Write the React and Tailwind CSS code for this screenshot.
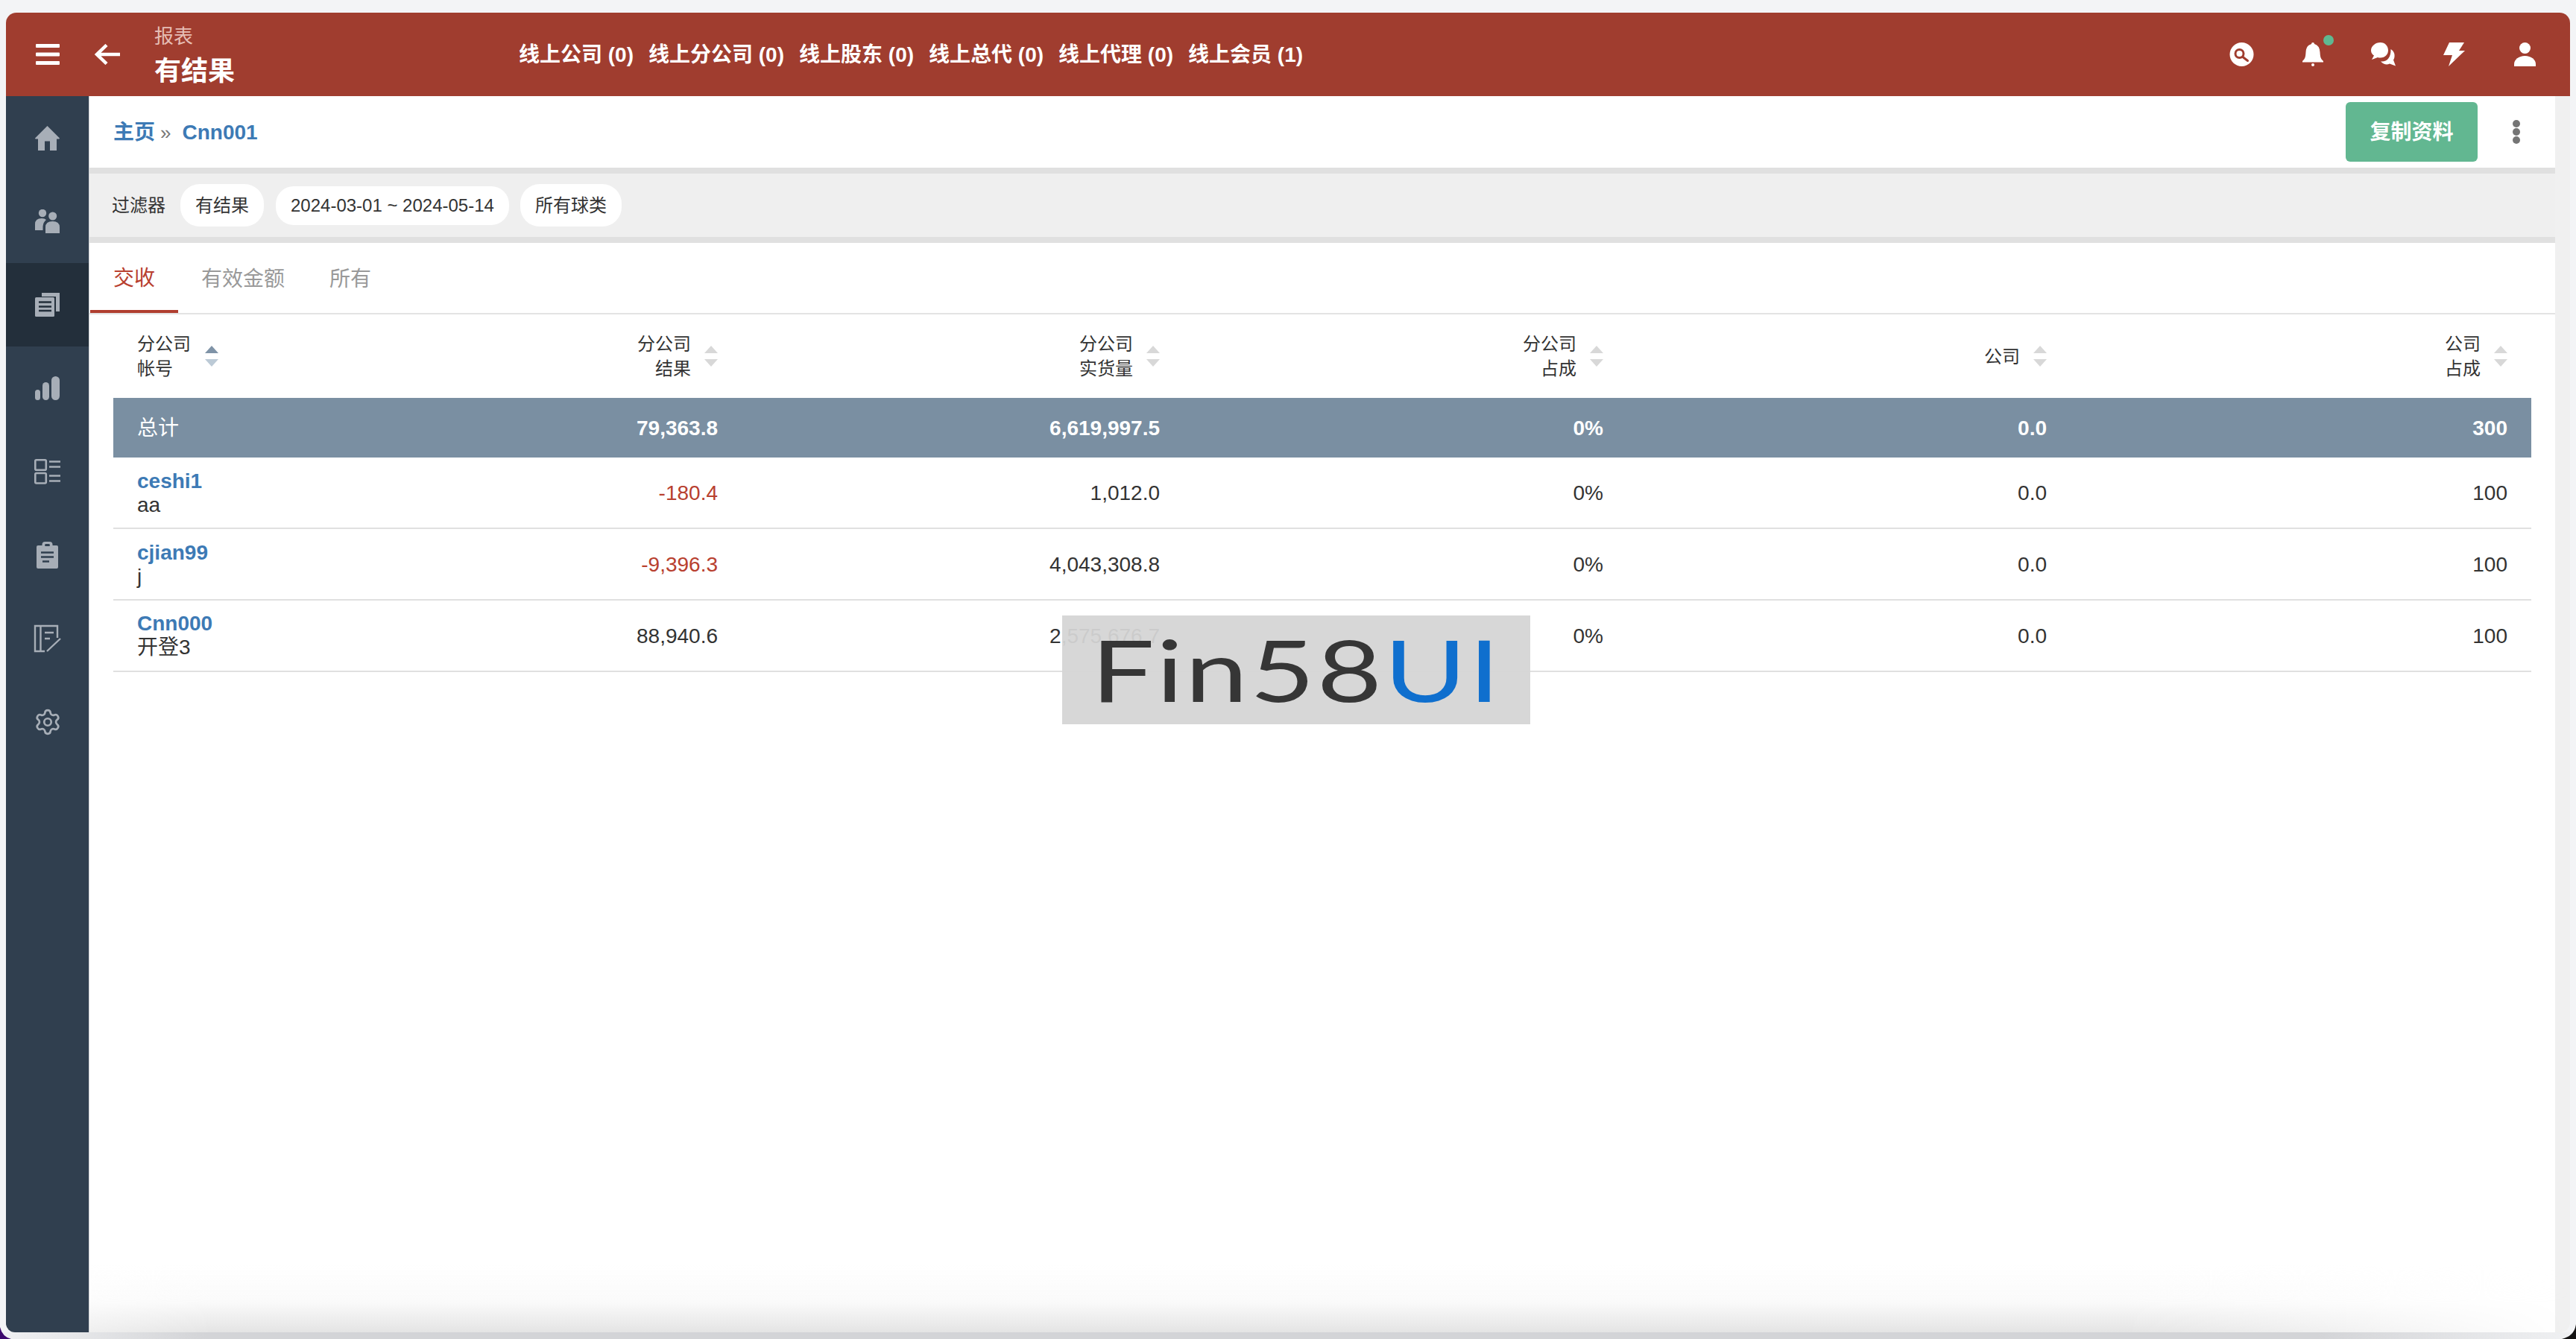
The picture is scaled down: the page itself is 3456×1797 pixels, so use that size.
import React from "react";
import { Settings } from "lucide-react";

const links = [
  "线上公司 (0)",
  "线上分公司 (0)",
  "线上股东 (0)",
  "线上总代 (0)",
  "线上代理 (0)",
  "线上会员 (1)",
];

const rows = [
  { id: "ceshi1", name: "aa", result: "-180.4", neg: true, goods: "1,012.0", namePad: "pt-[2px]" },
  { id: "cjian99", name: "j", result: "-9,396.3", neg: true, goods: "4,043,308.8", namePad: "pt-[2px]" },
  { id: "Cnn000", name: "开登3", result: "88,940.6", neg: false, goods: "2,575,676.7", namePad: "" },
];

const gridCols = "grid grid-cols-[248px_595px_593px_595px_595px_618px]";

function HomeIcon() {
  return (
    <svg width="33" height="33" viewBox="0 0 33 33" fill="#a7aeb7">
      <path d="M16.5 0 33 16.5l-.6 1H29V33h-9V20.500h-7V33H4V17.500H.6l-.6-1z" />
    </svg>
  );
}

function PeopleIcon() {
  return (
    <svg width="33" height="32" viewBox="0 0 33 32" fill="#a7aeb7">
      <circle cx="10" cy="5" r="5.200" />
      <circle cx="23.700" cy="9" r="5.500" />
      <path d="M0 28v-8q0-8 9-8 4 0 6 2-4 3-4.500 9v5z" />
      <path d="M14 32v-8q0-8 9.500-8T33 24v8z" />
    </svg>
  );
}

function PapersIcon() {
  return (
    <svg width="33" height="32" viewBox="0 0 33 32" fill="#a7aeb7">
      <path d="M9 0h24v25h-5V5H9z" />
      <rect x="0" y="6" width="26" height="26" rx="1.500" />
      <path d="M5 12.500h17M5 18.500h17M5 24h17" stroke="#232f3b" strokeWidth="2.400" />
    </svg>
  );
}

function BarsIcon() {
  return (
    <svg width="33" height="32" viewBox="0 0 33 32" fill="#a7aeb7">
      <rect x="0" y="18" width="7" height="14" rx="3.500" />
      <rect x="10" y="8" width="9" height="24" rx="4.500" />
      <rect x="22" y="0" width="11" height="32" rx="5.500" />
    </svg>
  );
}

function ListIcon() {
  return (
    <svg width="35" height="34" viewBox="0 0 35 34" fill="none" stroke="#a7aeb7" strokeWidth="2.600">
      <rect x="1.300" y="1.300" width="14.500" height="13.500" rx="1.500" />
      <rect x="1.300" y="19" width="14.500" height="13.500" rx="1.500" />
      <path d="M20 3.500h15M20 10.500h15M20 22.500h15M20 29.500h15" />
    </svg>
  );
}

function ClipboardIcon() {
  return (
    <svg width="29" height="36" viewBox="0 0 29 36" fill="#a7aeb7">
      <rect x="0" y="5" width="29" height="31" rx="2" />
      <rect x="7.500" y="0" width="14" height="9" rx="4" />
      <rect x="11" y="3" width="7" height="3" rx="1.500" fill="#303f4f" />
      <path d="M6 14.500h17M6 20.500h17M8 26.500h9" stroke="#303f4f" strokeWidth="2.400" />
    </svg>
  );
}

function FormIcon() {
  return (
    <svg width="37" height="38" viewBox="0 0 37 38" fill="none" stroke="#a7aeb7" strokeWidth="2.400">
      <path d="M32 18V2H2v34h13" />
      <path d="M9.500 2v34M15 11h12M15 19h7M18 36 36 19" />
    </svg>
  );
}

function SearchIcon() {
  return (
    <svg width="33" height="32" viewBox="0 0 33 32">
      <circle cx="16.500" cy="16" r="16" fill="#fff" />
      <circle cx="13.500" cy="15" r="5.500" fill="none" stroke="#a03d2f" strokeWidth="3" />
      <path d="m18 19.500 6.500 5" stroke="#a03d2f" strokeWidth="3" strokeLinecap="round" />
    </svg>
  );
}

function BellIcon() {
  return (
    <svg width="28" height="32" viewBox="0 0 28 32" fill="#fff">
      <path d="M14 0q2 0 2 2 7 2 7.500 11c.3 6 1 9 4.500 12v1.500H0V25c3.500-3 4.200-6 4.500-12C5 4 10 3 12 2q0-2 2-2z" />
      <circle cx="14" cy="30" r="2" />
    </svg>
  );
}

function ChatIcon() {
  return (
    <svg width="33" height="32" viewBox="0 0 33 32" fill="#fff">
      <path d="M12.500 0C19 0 23 5 23 10.500S19 20.500 12.500 20.500q-2 0-3.500-.6L1 23l3-5.500Q0 15 0 10.500C0 5 6 0 12.500 0z" />
      <path d="M26.500 9c4 2.500 5.500 6 5 10-.2 2-1 3.500-1.500 4.500l3 8-8-3q-6 3-12-3c8 1 14-5 13.500-16.500z" />
    </svg>
  );
}

function BoltIcon() {
  return (
    <svg width="29" height="32" viewBox="0 0 29 32" fill="#fff">
      <path d="M8 0h20l-7 11h8L7 32l5-15H0z" />
    </svg>
  );
}

function UserIcon() {
  return (
    <svg width="29" height="32" viewBox="0 0 29 32" fill="#fff">
      <ellipse cx="14.500" cy="7.500" rx="7.500" ry="7.500" />
      <path d="M0 32v-3c0-6 6-11 14.500-11S29 23 29 29v3z" />
    </svg>
  );
}

function SortArrows({ active }) {
  return (
    <svg width="18" height="28" viewBox="0 0 18 28" className="shrink-0">
      <polygon points="9,0 18,10 0,10" fill={active ? "#7f93a7" : "#d8d8d8"} />
      <polygon points="0,18 18,18 9,28" fill={active ? "#bccad6" : "#d8d8d8"} />
    </svg>
  );
}

function HeadCell({ top, bottom }) {
  return (
    <div className="flex items-center justify-end gap-[18px] pr-[32px]">
      <div className="text-right text-[24px] leading-[33px]">
        {top && <div>{top}</div>}
        <div>{bottom}</div>
      </div>
      <SortArrows />
    </div>
  );
}

const sideItems = [
  <HomeIcon />,
  <PeopleIcon />,
  <PapersIcon />,
  <BarsIcon />,
  <ListIcon />,
  <ClipboardIcon />,
  <FormIcon />,
  <Settings size={38} color="#a7aeb7" strokeWidth={1.700} />,
];

export default function App() {
  return (
    <div className="relative flex h-screen w-full flex-col overflow-hidden bg-[#f3f4f6] pt-[17px] text-[#333] [font-family:'Liberation_Sans','Noto_Sans_CJK_SC',sans-serif]">
      {/* window */}
      <div className="mx-[8px] flex min-h-0 flex-1 flex-col overflow-hidden rounded-t-[14px] rounded-b-[12px] bg-white">
        {/* header */}
        <div className="flex h-[112px] shrink-0 items-center bg-[#a03d2f] text-white">
          <svg width="32" height="28" viewBox="0 0 32 28" fill="#fff" className="ml-[40px] shrink-0">
            <rect x="0" y="0" width="32" height="5" rx="1" />
            <rect x="0" y="11.500" width="32" height="5" rx="1" />
            <rect x="0" y="23" width="32" height="5" rx="1" />
          </svg>
          <svg width="34" height="28" viewBox="0 0 34 28" fill="none" stroke="#fff" strokeWidth="4.500" className="ml-[47px] shrink-0">
            <path d="M34 14H4M16 1.500 3 14l13 12.500" />
          </svg>
          <div className="ml-[46px] mt-[6px] w-[489px] shrink-0">
            <div className="text-[26px] leading-[30px] text-[#e6bdb5]">报表</div>
            <div className="mt-[10px] text-[36px] font-bold leading-[44px]">有结果</div>
          </div>
          <div className="flex gap-[20px] pt-[2px] text-[28px] font-bold">
            {links.map((l) => (
              <span key={l}>{l}</span>
            ))}
          </div>
          <div className="ml-auto flex pr-[13px]">
            <div className="flex w-[95px] justify-center"><SearchIcon /></div>
            <div className="relative flex w-[95px] justify-center">
              <BellIcon />
              <span className="absolute left-[62px] top-[-10px] h-[14px] w-[14px] rounded-full bg-[#5fb891]" />
            </div>
            <div className="flex w-[95px] justify-center"><ChatIcon /></div>
            <div className="flex w-[95px] justify-center"><BoltIcon /></div>
            <div className="flex w-[95px] justify-center"><UserIcon /></div>
          </div>
        </div>

        <div className="flex min-h-0 flex-1">
          {/* sidebar */}
          <div className="w-[112px] shrink-0 border-r border-[#cfd2d6] bg-[#303f4f]">
            {sideItems.map((icon, i) => (
              <div
                key={i}
                className={`flex h-[112px] items-center justify-center ${i === 2 ? "bg-[#232f3b]" : ""}`}
              >
                {icon}
              </div>
            ))}
          </div>

          <div className="relative min-w-0 flex-1">
            <div className="mr-[20px] h-full bg-white">
              {/* breadcrumb */}
              <div className="flex h-[96px] items-center pl-[32px] pr-[47px]">
                <div className="pt-[2px] text-[28px] font-bold text-[#3d7ab5]">
                  主页
                  <span className="ml-[7px] mr-[15px] text-[26px] font-normal text-[#777]">»</span>
                  Cnn001
                </div>
                <button className="ml-auto flex h-[80px] w-[177px] items-center justify-center rounded-[6px] bg-[#62b791] pt-[1px] text-[28px] font-bold text-white">
                  复制资料
                </button>
                <div className="ml-[47px] flex w-[10px] flex-col gap-[1px]">
                  <span className="h-[10px] rounded-full bg-[#757575]" />
                  <span className="h-[10px] rounded-full bg-[#757575]" />
                  <span className="h-[10px] rounded-full bg-[#757575]" />
                </div>
              </div>

              {/* filter */}
              <div className="box-border flex h-[101px] items-center border-y-8 border-[#e0e0e0] bg-[#efefef] pl-[30px] text-[24px]">
                <span className="mr-[20px]">过滤器</span>
                <span className="mr-[16px] flex h-[57px] items-center rounded-[26px] bg-white px-[20px]">有结果</span>
                <span className="mr-[15px] flex h-[52px] items-center rounded-[24px] bg-white px-[20px]">2024-03-01 ~ 2024-05-14</span>
                <span className="flex h-[57px] items-center rounded-[26px] bg-white px-[20px]">所有球类</span>
              </div>

              {/* tabs */}
              <div className="flex h-[96px] border-b-2 border-[#e3e3e3] pl-px text-[28px] text-[#999]">
                <div className="flex items-center border-b-4 border-[#b03e2f] px-[31px] pt-[6px] text-[#b8402f]">交收</div>
                <div className="flex items-center pl-[31px] pr-[29px] pt-[4px]">有效金额</div>
                <div className="flex items-center pl-[31px] pt-[4px]">所有</div>
              </div>

              {/* table */}
              <div className="pl-[32px] pr-[32px]">
                <div className={`${gridCols} h-[112px]`}>
                  <div className="flex items-center gap-[19px] pl-[32px]">
                    <div className="text-[24px] leading-[33px]">
                      <div>分公司</div>
                      <div>帐号</div>
                    </div>
                    <SortArrows active />
                  </div>
                  <HeadCell top="分公司" bottom="结果" />
                  <HeadCell top="分公司" bottom="实货量" />
                  <HeadCell top="分公司" bottom="占成" />
                  <HeadCell bottom="公司" />
                  <HeadCell top="公司" bottom="占成" />
                </div>

                <div className={`${gridCols} h-[80px] items-center bg-[#7a8fa2] pt-[1px] text-[28px] font-bold text-white`}>
                  <div className="pl-[32px] font-normal">总计</div>
                  <div className="pr-[32px] text-right">79,363.8</div>
                  <div className="pr-[32px] text-right">6,619,997.5</div>
                  <div className="pr-[32px] text-right">0%</div>
                  <div className="pr-[32px] text-right">0.0</div>
                  <div className="pr-[32px] text-right">300</div>
                </div>

                {rows.map((r) => (
                  <div
                    key={r.id}
                    className={`${gridCols} box-border h-[96px] items-center border-b-2 border-[#e0e0e0] text-[28px]`}
                  >
                    <div className={`pl-[32px] leading-[32px] ${r.namePad}`}>
                      <div className="font-bold text-[#3d7ab5]">{r.id}</div>
                      <div>{r.name}</div>
                    </div>
                    <div className={`pr-[32px] pt-[2px] text-right ${r.neg ? "text-[#b8402f]" : ""}`}>{r.result}</div>
                    <div className="pr-[32px] pt-[2px] text-right">{r.goods}</div>
                    <div className="pr-[32px] pt-[2px] text-right">0%</div>
                    <div className="pr-[32px] pt-[2px] text-right">0.0</div>
                    <div className="pr-[32px] pt-[2px] text-right">100</div>
                  </div>
                ))}
              </div>
            </div>

            {/* scrollbar track */}
            <div className="absolute bottom-0 right-0 top-0 w-[20px] bg-[#f0f0f0]" />
            {/* bottom shade */}
            <div className="pointer-events-none absolute bottom-0 left-0 right-0 h-[90px] bg-[linear-gradient(to_bottom,transparent,#fafafa_55%,#e4e4e4)] [mask-image:linear-gradient(to_right,rgba(0,0,0,0.6),black_5%,black_82%,transparent)]" />
          </div>
        </div>
      </div>

      {/* strip under the window */}
      <div className="h-[9px] shrink-0 bg-[linear-gradient(to_right,#f0f1f3,#d3d4d7_8%,#d3d4d7_90%,#f0f1f3)]" />

      {/* desktop showing in the corners */}
      <svg width="16" height="18" viewBox="0 0 16 18" className="absolute bottom-0 left-0">
        <path d="M0 2q3 13 15 16H0z" fill="#3d0a6e" />
      </svg>
      <svg width="20" height="20" viewBox="0 0 20 20" className="absolute bottom-0 right-0">
        <path d="M20 0q-2 16-19 20h19z" fill="#141414" />
      </svg>

      {/* logo stamp over the table */}
      <div className="absolute left-[1425px] top-[826px] flex h-[146px] w-[628px] items-center justify-center bg-[#d4d4d4]/[0.94] pb-[4px]">
        <span className="origin-center scale-x-[1.31] text-[115px] font-normal leading-none tracking-[2px] text-[#363636] [font-family:'Lato',sans-serif]">
          Fin58<span className="text-[#0f6fce]">UI</span>
        </span>
      </div>
    </div>
  );
}
